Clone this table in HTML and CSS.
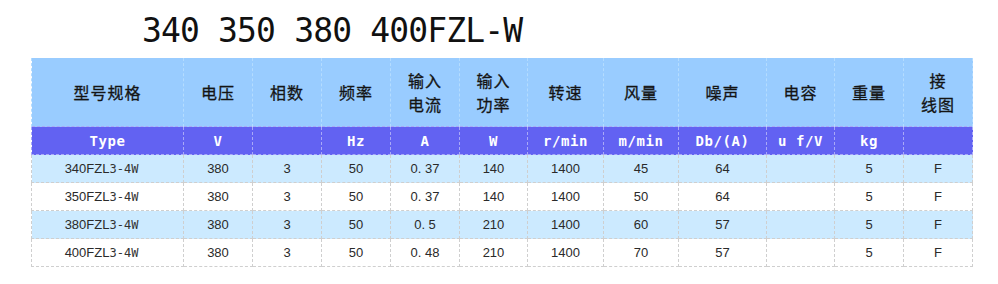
FILE: index.html
```html
<!DOCTYPE html>
<html lang="zh-CN">
<head>
<meta charset="utf-8">
<title>340 350 380 400FZL-W</title>
<link rel="stylesheet" href="styles.css">
</head>
<body>
<h1 class="title">340 350 380 400FZL-W</h1>
<table class="spec">
  <colgroup>
    <col class="c1"><col class="c2"><col class="c2"><col class="c2"><col class="c2"><col class="c3">
    <col class="c4"><col class="c5"><col class="c6"><col class="c3"><col class="c2"><col class="c2">
  </colgroup>
  <thead>
    <tr class="head-cn">
      <th>型号规格</th><th>电压</th><th>相数</th><th>频率</th><th>输入<br>电流</th><th>输入<br>功率</th>
      <th>转速</th><th>风量</th><th>噪声</th><th>电容</th><th>重量</th><th>接<br>线图</th>
    </tr>
    <tr class="head-unit">
      <th>Type</th><th>V</th><th></th><th>Hz</th><th>A</th><th>W</th>
      <th>r/min</th><th>m/min</th><th>Db/(A)</th><th>u f/V</th><th>kg</th><th></th>
    </tr>
  </thead>
  <tbody>
    <tr class="alt">
      <td class="model">340FZL<span class="sfx">3-4W</span></td><td>380</td><td>3</td><td>50</td><td>0. 37</td><td>140</td>
      <td>1400</td><td>45</td><td>64</td><td></td><td>5</td><td>F</td>
    </tr>
    <tr>
      <td class="model">350FZL<span class="sfx">3-4W</span></td><td>380</td><td>3</td><td>50</td><td>0. 37</td><td>140</td>
      <td>1400</td><td>50</td><td>64</td><td></td><td>5</td><td>F</td>
    </tr>
    <tr class="alt">
      <td class="model">380FZL<span class="sfx">3-4W</span></td><td>380</td><td>3</td><td>50</td><td>0. 5</td><td>210</td>
      <td>1400</td><td>60</td><td>57</td><td></td><td>5</td><td>F</td>
    </tr>
    <tr>
      <td class="model">400FZL<span class="sfx">3-4W</span></td><td>380</td><td>3</td><td>50</td><td>0. 48</td><td>210</td>
      <td>1400</td><td>70</td><td>57</td><td></td><td>5</td><td>F</td>
    </tr>
  </tbody>
</table>
</body>
</html>
```
FILE: styles.css
```css
html, body {
  margin: 0;
  padding: 0;
  background: #ffffff;
}

.title {
  margin: 0;
  padding: 14px 0 0 142px;
  height: 44px;
  box-sizing: border-box;
  font-family: "DejaVu Sans Mono", monospace;
  font-weight: normal;
  font-size: 33px;
  line-height: 33px;
  letter-spacing: -0.85px;
  color: #111111;
}

.spec {
  margin: 14px 0 0 31px;
  width: 941px;
  border-collapse: collapse;
  table-layout: fixed;
}

.c1 { width: 152px; }
.c2 { width: 69px; }
.c3 { width: 68px; }
.c4 { width: 76px; }
.c5 { width: 75px; }
.c6 { width: 88px; }

.spec th, .spec td {
  padding: 0;
  text-align: center;
  vertical-align: middle;
}

.head-cn th {
  height: 68px;
  background: #99ccff;
  color: #141414;
  font-family: "Noto Sans CJK SC", sans-serif;
  font-weight: normal;
  font-size: 16px;
  line-height: 24px;
  letter-spacing: 1px;
  -webkit-text-stroke: 0.3px #141414;
  border-left: 1px dashed #b4dcff;
  border-right: 1px dashed #b4dcff;
}

.head-unit th {
  height: 27px;
  background: #6262f2;
  color: #ffffff;
  font-family: "DejaVu Sans Mono", monospace;
  font-weight: bold;
  font-size: 14px;
  letter-spacing: 0.6px;
  border: 1px dashed #a9a9f7;
}

.spec td {
  height: 27px;
  font-family: "Liberation Sans", Arial, sans-serif;
  font-size: 13px;
  color: #2a2a2a;
  border: 1px dashed #cfcfcf;
  background: #ffffff;
}

.spec td.model {
  padding-right: 12px;
}

.spec tr.alt td {
  background: #cceaff;
}

.sfx {
  font-family: "DejaVu Sans Mono", monospace;
  font-size: 12px;
  color: #333333;
}
```
